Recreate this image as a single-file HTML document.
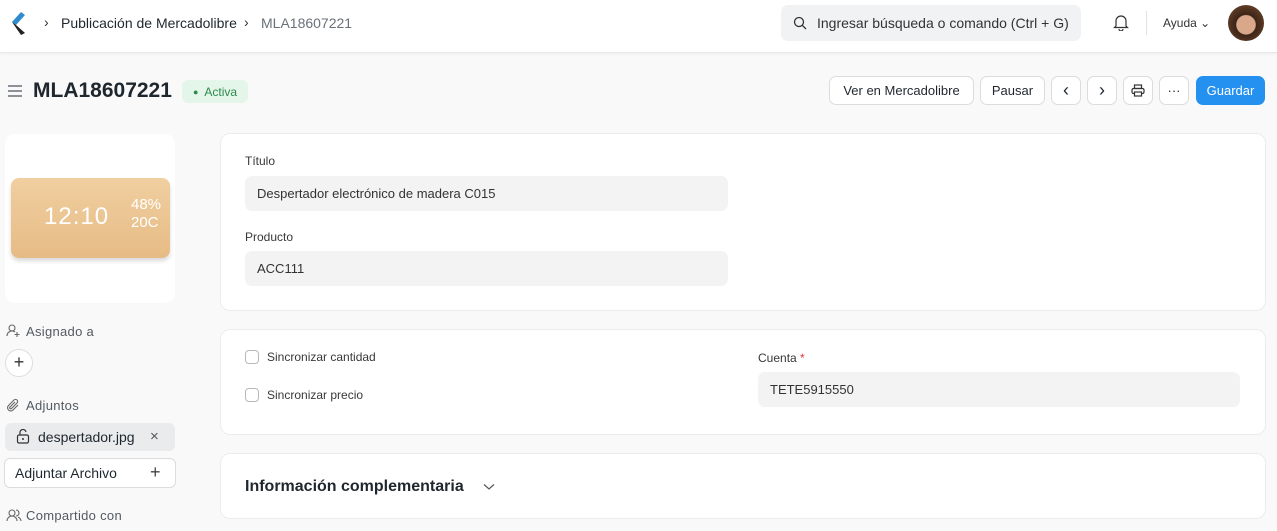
<!DOCTYPE html>
<html><head><meta charset="utf-8"><style>
*{box-sizing:border-box;margin:0;padding:0}
body{width:1277px;height:531px;overflow:hidden;background:#f9f9f9;font-family:"Liberation Sans",sans-serif;color:#1f272e;font-size:13px;position:relative}
.nav{position:absolute;left:0;top:0;width:1277px;height:53px;background:#fff;border-bottom:1px solid #e8e8e8;box-shadow:0 1px 3px rgba(0,0,0,.05)}
.abs{position:absolute}
.btn{position:absolute;top:76px;height:29px;background:#fff;border:1px solid #dcdcdc;border-radius:7px;font-size:13px;display:flex;align-items:center;justify-content:center;color:#1f272e}
.card{position:absolute;left:220px;width:1046px;background:#fff;border-radius:10px;border:1px solid #ececec}
.lbl{position:absolute;font-size:12px;color:#383838}
.inp{position:absolute;height:35px;background:#f3f3f3;border-radius:7px;font-size:13px;padding-left:12px;display:flex;align-items:center;color:#333}
.cb{position:absolute;width:14px;height:14px;border:1px solid #b8b8b8;border-radius:4px;background:#fff}
.side{position:absolute;left:26px;font-size:13px;color:#525a61;letter-spacing:.3px}
</style></head><body>
<div class="nav">
 <svg class="abs" style="left:10px;top:11px" width="16" height="26" viewBox="0 0 16 26"><path d="M11 1 L2 11 L6 14 L15 4Z" fill="#2e8bd0"/><path d="M2 11 L11 24 L15 22 L6 14Z" fill="#222"/></svg>
 <div class="abs" style="left:44px;top:14px;font-size:14px;color:#333">›</div>
 <div class="abs" style="left:61px;top:15px;font-size:14px;color:#1f272e">Publicación de Mercadolibre</div>
 <div class="abs" style="left:244px;top:14px;font-size:14px;color:#333">›</div>
 <div class="abs" style="left:261px;top:15px;font-size:14px;color:#6a7178">MLA18607221</div>
 <div class="abs" style="left:781px;top:5px;width:300px;height:36px;background:#f1f2f3;border-radius:7px"></div>
 <svg class="abs" style="left:793px;top:16px" width="14" height="14" viewBox="0 0 14 14"><circle cx="6" cy="6" r="4.5" fill="none" stroke="#333" stroke-width="1.3"/><path d="M9.3 9.3 L13 13" stroke="#333" stroke-width="1.3"/></svg>
 <div class="abs" style="left:817px;top:15px;font-size:14px;color:#333">Ingresar búsqueda o comando (Ctrl + G)</div>
 <svg class="abs" style="left:1113px;top:13px" width="16" height="18" viewBox="0 0 16 18"><path d="M3 13 V8 a5 5 0 0 1 10 0 V13 L14.5 14.5 H1.5Z" fill="none" stroke="#333" stroke-width="1.2"/><path d="M6 16 a2 2 0 0 0 4 0" fill="none" stroke="#333" stroke-width="1.2"/></svg>
 <div class="abs" style="left:1146px;top:11px;width:1px;height:24px;background:#e2e2e2"></div>
 <div class="abs" style="left:1163px;top:16px;font-size:12px;color:#333">Ayuda ⌄</div>
 <div class="abs" style="left:1228px;top:5px;width:36px;height:36px;border-radius:50%;background:radial-gradient(circle at 50% 55%,#d9a88a 0 35%,#3b2418 38%,#5c3a24 70%,#7a6a50)"></div>
</div>
<svg class="abs" style="left:7px;top:84px" width="16" height="14" viewBox="0 0 16 14"><path d="M1 2H15M1 7H15M1 12H15" stroke="#6b7178" stroke-width="1.5"/></svg>
<div class="abs" style="left:33px;top:79px;font-size:21px;font-weight:bold;color:#1f272e">MLA18607221</div>
<div class="abs" style="left:182px;top:80px;width:66px;height:23px;background:#e4f5e9;border-radius:6px;color:#2d8a4e;font-size:12px;display:flex;align-items:center;justify-content:center"><span style="font-size:9px;margin-right:6px">●</span>Activa</div>
<div class="btn" style="left:829px;width:145px">Ver en Mercadolibre</div>
<div class="btn" style="left:980px;width:65px">Pausar</div>
<div class="btn" style="left:1051px;width:30px;font-size:18px">‹</div>
<div class="btn" style="left:1087px;width:30px;font-size:18px">›</div>
<div class="btn" style="left:1123px;width:30px"><svg width="14" height="13" viewBox="0 0 14 13"><rect x="3.5" y="1" width="7" height="3.5" fill="none" stroke="#333" stroke-width="1.2"/><rect x="1" y="4.5" width="12" height="5" rx="1.5" fill="none" stroke="#333" stroke-width="1.2"/><rect x="3.5" y="8" width="7" height="4" fill="#fff" stroke="#333" stroke-width="1.2"/></svg></div>
<div class="btn" style="left:1159px;width:30px">···</div>
<div class="btn" style="left:1196px;width:69px;background:#2490ef;border-color:#2490ef;color:#fff">Guardar</div>

<div class="abs" style="left:5px;top:134px;width:170px;height:169px;background:#fff;border-radius:10px"></div>
<div class="abs" style="left:11px;top:178px;width:159px;height:80px;border-radius:8px;background:linear-gradient(180deg,#f0cfa0,#e6bb85);box-shadow:0 3px 4px rgba(0,0,0,.15)"></div>
<div class="abs" style="left:44px;top:203px;color:#fff;font-size:24px;letter-spacing:1px;font-family:'Liberation Sans',sans-serif">12:10</div>
<div class="abs" style="left:131px;top:196px;color:#fff;font-size:15px;line-height:18px">48%<br>20C</div>
<svg class="abs" style="left:6px;top:323px" width="15" height="15" viewBox="0 0 15 15"><circle cx="6" cy="5" r="3" fill="none" stroke="#666" stroke-width="1.1"/><path d="M1 13 a5 5 0 0 1 8 -4 M11 9 V14 M8.5 11.5 H13.5" fill="none" stroke="#666" stroke-width="1.1"/></svg>
<div class="side" style="top:324px">Asignado a</div>
<div class="abs" style="left:5px;top:349px;width:28px;height:28px;border-radius:50%;background:#fff;border:1px solid #ddd;text-align:center;line-height:25px;font-size:18px;color:#333">+</div>
<svg class="abs" style="left:6px;top:398px" width="15" height="15" viewBox="0 0 15 15"><path d="M12 7 L7 12 a3 3 0 0 1 -4.5 -4.5 L8 2 a2 2 0 0 1 3 3 L5.5 10.5 a1 1 0 0 1 -1.5 -1.5 L9 4" fill="none" stroke="#666" stroke-width="1.1"/></svg>
<div class="side" style="top:398px">Adjuntos</div>
<div class="abs" style="left:5px;top:423px;width:170px;height:28px;background:#e9ebed;border-radius:6px"></div>
<svg class="abs" style="left:16px;top:429px" width="14" height="15" viewBox="0 0 14 15"><rect x="1.5" y="6" width="11" height="8" rx="1.5" fill="none" stroke="#333" stroke-width="1.2"/><path d="M4 6 V4 a3 3 0 0 1 6 -1" fill="none" stroke="#333" stroke-width="1.2"/><circle cx="7" cy="10" r="1" fill="#333"/></svg>
<div class="abs" style="left:38px;top:429px;font-size:14px;color:#1f272e">despertador.jpg</div>
<div class="abs" style="left:150px;top:428px;font-size:15px;color:#555">×</div>
<div class="abs" style="left:4px;top:458px;width:172px;height:30px;background:#fff;border:1px solid #dcdcdc;border-radius:6px"></div>
<div class="abs" style="left:15px;top:465px;font-size:14px">Adjuntar Archivo</div>
<div class="abs" style="left:150px;top:462px;font-size:18px;color:#444">+</div>
<svg class="abs" style="left:6px;top:508px" width="16" height="15" viewBox="0 0 16 15"><circle cx="6" cy="5" r="3" fill="none" stroke="#666" stroke-width="1.1"/><path d="M1 13 a5 5 0 0 1 10 0 M10 2 a3 3 0 0 1 0 6 M12 9 a5 5 0 0 1 3 4" fill="none" stroke="#666" stroke-width="1.1"/></svg>
<div class="side" style="top:508px">Compartido con</div>

<div class="card" style="top:133px;height:178px">
 <div class="lbl" style="left:24px;top:20px">Título</div>
 <div class="inp" style="left:24px;top:42px;width:483px">Despertador electrónico de madera C015</div>
 <div class="lbl" style="left:24px;top:96px">Producto</div>
 <div class="inp" style="left:24px;top:117px;width:483px">ACC111</div>
</div>
<div class="card" style="top:329px;height:106px">
 <div class="cb" style="left:24px;top:20px"></div>
 <div class="lbl" style="left:46px;top:20px">Sincronizar cantidad</div>
 <div class="cb" style="left:24px;top:58px"></div>
 <div class="lbl" style="left:46px;top:58px">Sincronizar precio</div>
 <div class="lbl" style="left:537px;top:21px">Cuenta <span style="color:#e03636">*</span></div>
 <div class="inp" style="left:537px;top:42px;width:482px">TETE5915550</div>
</div>
<div class="card" style="top:453px;height:66px">
 <div class="abs" style="left:24px;top:24px;font-size:16px;font-weight:bold">Información complementaria</div>
 <svg class="abs" style="left:262px;top:29px" width="12" height="8" viewBox="0 0 12 8"><path d="M1 1.5 L6 6 L11 1.5" fill="none" stroke="#555" stroke-width="1.2"/></svg>
</div>
</body></html>
